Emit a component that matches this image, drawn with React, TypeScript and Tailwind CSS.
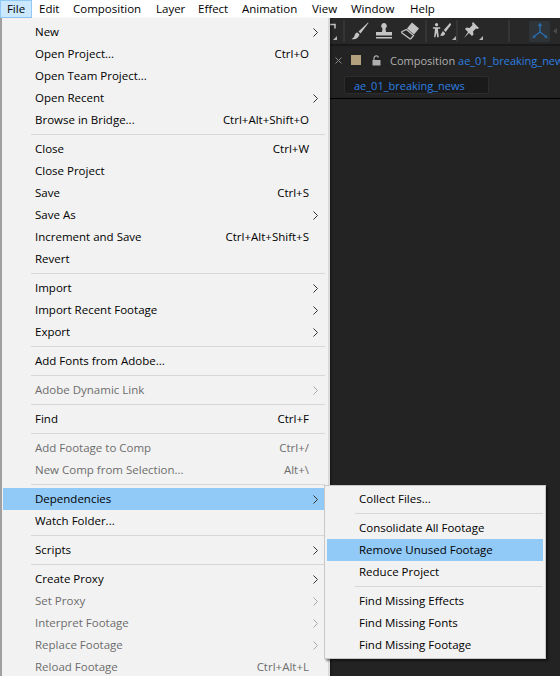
type Item = { l: string; s?: string; a?: boolean; d?: boolean; h?: boolean };
const groups: Item[][] = [
  [{ l: "New", a: true }, { l: "Open Project...", s: "Ctrl+O" }, { l: "Open Team Project..." }, { l: "Open Recent", a: true }, { l: "Browse in Bridge...", s: "Ctrl+Alt+Shift+O" }],
  [{ l: "Close", s: "Ctrl+W" }, { l: "Close Project" }, { l: "Save", s: "Ctrl+S" }, { l: "Save As", a: true }, { l: "Increment and Save", s: "Ctrl+Alt+Shift+S" }, { l: "Revert" }],
  [{ l: "Import", a: true }, { l: "Import Recent Footage", a: true }, { l: "Export", a: true }],
  [{ l: "Add Fonts from Adobe..." }],
  [{ l: "Adobe Dynamic Link", a: true, d: true }],
  [{ l: "Find", s: "Ctrl+F" }],
  [{ l: "Add Footage to Comp", s: "Ctrl+/", d: true }, { l: "New Comp from Selection...", s: "Alt+\\", d: true }],
  [{ l: "Dependencies", a: true, h: true }, { l: "Watch Folder..." }],
  [{ l: "Scripts", a: true }],
  [{ l: "Create Proxy", a: true }, { l: "Set Proxy", a: true, d: true }, { l: "Interpret Footage", a: true, d: true }, { l: "Replace Footage", a: true, d: true }, { l: "Reload Footage", s: "Ctrl+Alt+L", d: true }],
];
const sub: Item[][] = [
  [{ l: "Collect Files..." }],
  [{ l: "Consolidate All Footage" }, { l: "Remove Unused Footage", h: true }, { l: "Reduce Project" }],
  [{ l: "Find Missing Effects" }, { l: "Find Missing Fonts" }, { l: "Find Missing Footage" }],
];

function Chevron({ d }: { d?: boolean }) {
  return (
    <svg width="5" height="9" viewBox="0 0 5 9" className="absolute right-[7px] top-[7px]">
      <path d="M0.500 0.500l4 4-4 4" fill="none" stroke={d ? "#a8a8a8" : "#333"} strokeWidth="1" />
    </svg>
  );
}

function Row({ it }: { it: Item }) {
  return (
    <div className={`relative flex h-[22px] items-center justify-between pl-[32px] ${it.h ? "bg-[#91c9f7]" : ""} ${it.d ? "text-[#6d6d6d]" : "text-black"}`}>
      <span>{it.l}</span>
      {it.s && <span className="pr-[16px]">{it.s}</span>}
      {it.a && <Chevron d={it.d} />}
    </div>
  );
}

function Sep({ ml }: { ml: string }) {
  return (
    <div className="flex h-[7px] items-center">
      <div className={`h-px flex-1 bg-[#d7d7d7] ${ml}`} />
    </div>
  );
}

function Tri() {
  return <span className="absolute bottom-[1px] right-0 h-0 w-0 border-b-[4px] border-l-[4px] border-b-[#b5b5b5] border-l-transparent" />;
}

function VSep({ ml }: { ml: string }) {
  return <div className={`h-[22px] w-[2px] shrink-0 bg-[#353535] ${ml}`} />;
}

function Tools() {
  const c = "#c4c4c4";
  return (
    <div className="flex h-[26px] items-center bg-[#282828]">
      <div className="relative h-[20px] w-[7px] shrink-0">
        <svg width="7" height="20" viewBox="0 0 7 20"><path d="M0 3.500h5v4" fill="none" stroke={c} strokeWidth="1.500" /></svg>
        <Tri />
      </div>
      <VSep ml="ml-[6px]" />
      <svg width="18" height="18" viewBox="0 0 18 18" className="ml-[6px] shrink-0"><path d="M17 0.500L7.500 9.500l2 2L17.500 1zM6.500 10.500c-3 .5-2.500 3-3.500 4.500-.5.700-1.500 1.500-2.500 2 3.500 1 7-.5 8-4.500z" fill={c} /></svg>
      <svg width="18" height="18" viewBox="0 0 18 18" className="ml-[6px] shrink-0"><path d="M9 1a3 3 0 0 1 1.500 5.500L11 10h6v3.500H1V10h6l.5-3.500A3 3 0 0 1 9 1zM1 15h16v1.500H1z" fill={c} /></svg>
      <div className="relative ml-[7px] h-[20px] w-[24px] shrink-0">
        <svg width="20" height="20" viewBox="0 0 20 20"><path d="M12 1.500l7 6-5 6-7-6z" fill={c} /><path d="M6.500 8.500l7 6-2.500 3c-.5.500-1 .5-1.500 0L2 12c-.5-.500-.500-1 0-1.500z" fill="none" stroke={c} strokeWidth="1.300" /></svg>
      </div>
      <VSep ml="ml-[1px]" />
      <div className="relative ml-[5px] h-[20px] w-[24px] shrink-0">
        <svg width="20" height="20" viewBox="0 0 22 22"><circle cx="5" cy="4" r="1.800" fill={c} /><path d="M1 7h8v1.500H6.500l1 9.500H5.800L4.800 13l-1 5H2.300l1-9.500H1z" fill={c} /><path d="M20 2l-7 8 2 2 6-8zM12 11l-3 5c2 1 5 .5 5.500-2.500z" fill={c} /></svg>
        <Tri />
      </div>
      <VSep ml="ml-[0px]" />
      <div className="relative ml-[5px] h-[20px] w-[20px] shrink-0">
        <svg width="17" height="18" viewBox="0 0 17 18"><path d="M10 1l6 6-1.500 1-1.500-.5-3 3 .5 3-1.500 1.500-3-3-5 5 4-6-3-3 1.500-1.500 3 .5 3-3-.5-1.500z" fill={c} /></svg>
        <Tri />
      </div>
      <VSep ml="ml-[25px]" />
      <div className="ml-[19px] flex h-[21px] w-[21px] shrink-0 items-center justify-center rounded-[2px] bg-[#2f3439]">
        <svg width="18" height="18" viewBox="0 0 18 18"><path d="M9 3v7M9 10l-6 4.500M9 10l6 4.500" stroke="#2a6cae" strokeWidth="1.400" fill="none" /><path d="M9 0.500L6.800 4h4.400zM1 16l4-.5-2-2.800zM17 16l-4-.5 2-2.800z" fill="#2a6cae" /></svg>
      </div>
      <svg width="6" height="8" viewBox="0 0 6 8" className="ml-[3px] shrink-0"><path d="M0 4l4-3v6z" fill="#4a4a4a" /></svg>
    </div>
  );
}

export default function App() {
  return (
    <div className="relative h-[676px] w-[560px] overflow-hidden bg-[#232323] font-['Open_Sans','Noto_Sans',sans-serif] text-[11.5px] leading-none text-black">
      <div className="flex h-[18px] items-center bg-white">
        <div className="flex h-[18px] w-[32px] shrink-0 items-center justify-center border border-[#90c8f6] bg-[#cce8ff]">File</div>
        <span className="ml-[7px] w-[34px] shrink-0">Edit</span>
        <span className="w-[83px] shrink-0">Composition</span>
        <span className="w-[42px] shrink-0">Layer</span>
        <span className="w-[44px] shrink-0">Effect</span>
        <span className="w-[70px] shrink-0">Animation</span>
        <span className="w-[39px] shrink-0">View</span>
        <span className="w-[59px] shrink-0">Window</span>
        <span className="shrink-0">Help</span>
      </div>
      <div className="pl-[330px]">
        <Tools />
        <div className="h-[2px] bg-[#191919]" />
        <div className="flex h-[28px] items-center pl-[5px] text-[11px] text-[#b0b0b0]">
          <svg width="7" height="7" viewBox="0 0 7 7" className="shrink-0"><path d="M0.500 0.500l6 6M6.500 0.500l-6 6" stroke="#8a8a8a" strokeWidth="1" /></svg>
          <span className="ml-[9px] h-[10px] w-[10px] shrink-0 bg-[#b3a17e]" />
          <svg width="9" height="11" viewBox="0 0 9 11" className="ml-[11px] shrink-0"><path d="M0.500 5h8v5.500h-8z" fill="#b0b0b0" /><path d="M2 5V3a2.300 2.300 0 0 1 4.500-.5" fill="none" stroke="#b0b0b0" strokeWidth="1.200" /></svg>
          <span className="ml-[9px] shrink-0 whitespace-nowrap">Composition <span className="text-[#2d7fe0]">ae_01_breaking_news</span></span>
        </div>
        <div className="border-b border-b-black pb-[4px] pl-[14px] pt-[2px] text-[11px]">
          <div className="flex h-[18px] w-[145px] items-center rounded-[2px] border border-[#2c2c2c] bg-[#1a1a1a] pl-[9px] text-[#2d7fe0]">ae_01_breaking_news</div>
        </div>
      </div>

      <div className="absolute left-0 top-[18px] w-[330px] border-2 border-t-0 border-[#d0d0d0] border-l-[#a0a0a0] border-r-[#dadada] bg-[#f2f2f2] pl-px pr-[3px] pt-[3px] shadow-[1px_1px_2px_rgba(0,0,0,0.4)]">
        {groups.map((g, i) => (
          <div key={i}>
            {i > 0 && <Sep ml="ml-[28px]" />}
            {g.map((it) => <Row key={it.l} it={it} />)}
          </div>
        ))}
      </div>

      <div className="absolute left-[324px] top-[485px] w-[222px] border border-[#c8c8c8] bg-[#f2f2f2] px-[2px] py-[2px] shadow-[2px_2px_2px_rgba(0,0,0,0.45)]">
        {sub.map((g, i) => (
          <div key={i}>
            {i > 0 && <Sep ml="ml-[28px]" />}
            {g.map((it) => <Row key={it.l} it={it} />)}
          </div>
        ))}
      </div>
    </div>
  );
}
